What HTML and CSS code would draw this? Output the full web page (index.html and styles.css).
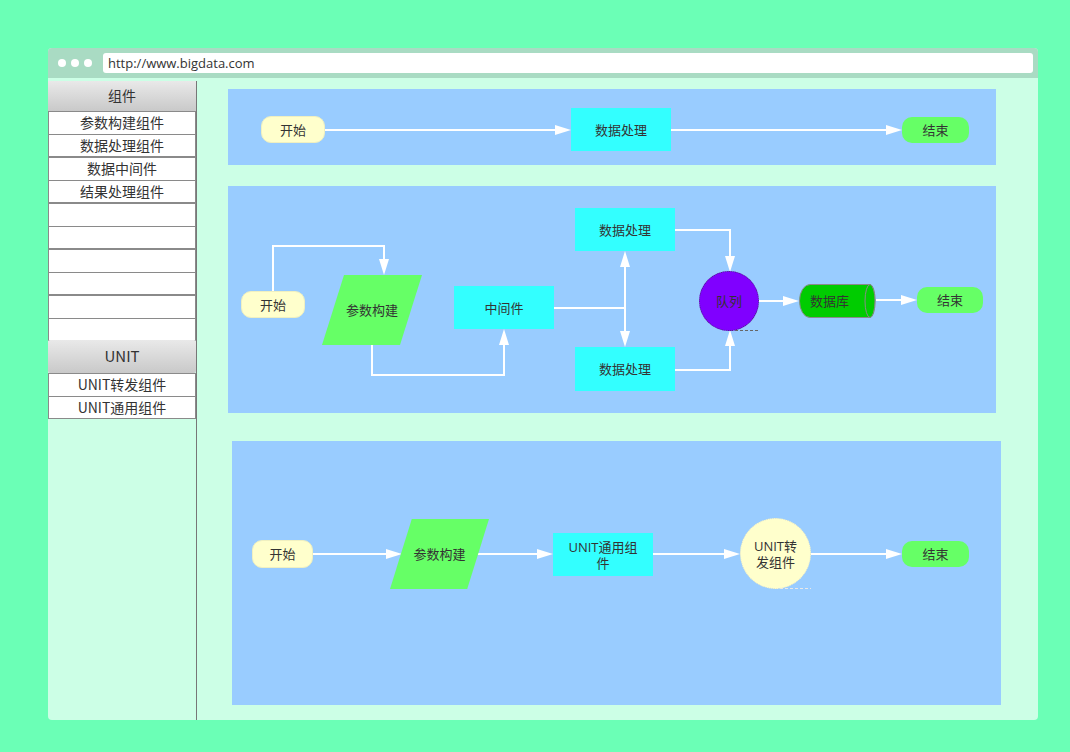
FILE: index.html
```html
<!DOCTYPE html>
<html lang="zh">
<head>
<meta charset="utf-8">
<title>bigdata</title>
<link rel="stylesheet" href="styles.css">
</head>
<body>
<div class="window">
  <div class="topbar">
    <div class="dots"><span class="dot"></span><span class="dot"></span><span class="dot"></span></div>
    <div class="url">http://www.bigdata.com</div>
  </div>
  <div class="content">
    <aside class="sidebar">
      <div class="group-head">组件</div>
      <ul class="group"><li>参数构建组件</li><li>数据处理组件</li></ul>
      <ul class="group"><li>数据中间件</li><li>结果处理组件</li></ul>
      <ul class="group"><li></li><li></li></ul>
      <ul class="group"><li></li><li></li></ul>
      <ul class="group"><li></li><li></li></ul>
      <div class="group-head unit">UNIT</div>
      <ul class="group"><li>UNIT转发组件</li><li>UNIT通用组件</li></ul>
    </aside>
    <main class="main">
      <!-- Panel 1 -->
      <section class="panel p1">
        <svg class="wires" width="768" height="76">
          <line x1="97" y1="41" x2="330" y2="41"/><polygon points="343,41 327,36 327,46"/>
          <line x1="443" y1="41" x2="660" y2="41"/><polygon points="674,41 658,36 658,46"/>
        </svg>
        <div class="node pill start" style="left:33px;top:27px;width:64px;height:27px">开始</div>
        <div class="node box" style="left:343px;top:19px;width:100px;height:43px">数据处理</div>
        <div class="node pill end" style="left:674px;top:28px;width:67px;height:26px">结束</div>
      </section>

      <!-- Panel 2 -->
      <section class="panel p2">
        <svg class="wires" width="768" height="227">
          <polyline points="45,105 45,60 156,60 156,76"/><polygon points="156,89 151,73 161,73"/>
          <polyline points="144,159 144,189 276,189 276,156"/><polygon points="276,143 271,159 281,159"/>
          <line x1="326" y1="122" x2="397" y2="122"/>
          <line x1="397" y1="78" x2="397" y2="148"/>
          <polygon points="397,65 392,81 402,81"/><polygon points="397,161 392,145 402,145"/>
          <polyline points="447,44 502,44 502,73"/><polygon points="502,86 497,70 507,70"/>
          <polyline points="447,184 502,184 502,157"/><polygon points="502,144 497,160 507,160"/>
          <line x1="531" y1="115" x2="558" y2="115"/><polygon points="571,115 555,110 555,120"/>
          <line x1="648" y1="114" x2="676" y2="114"/><polygon points="689,114 673,109 673,119"/>
          <line class="dash dark" x1="502" y1="144.5" x2="531" y2="144.5"/>
        </svg>
        <div class="node pill start" style="left:13px;top:105px;width:64px;height:27px">开始</div>
        <div class="node para" style="left:94px;top:89px;width:100px;height:70px">参数构建</div>
        <div class="node box" style="left:226px;top:100px;width:100px;height:43px">中间件</div>
        <div class="node box" style="left:347px;top:22px;width:100px;height:43px">数据处理</div>
        <div class="node box" style="left:347px;top:161px;width:100px;height:44px">数据处理</div>
        <div class="node circle queue" style="left:471px;top:85px;width:60px;height:60px">队列</div>
        <div class="node db" style="left:571px;top:98px;width:77px;height:34px">
          <svg class="db-shape" width="77" height="34">
            <path d="M11,0.5 H71 A5,16.5 0 0 1 71,33.5 H11 A10.5,16.5 0 0 1 11,0.5 Z"/>
            <ellipse cx="71" cy="17" rx="5" ry="16.5"/>
          </svg>
          <span class="db-label">数据库</span>
        </div>
        <div class="node pill end" style="left:689px;top:101px;width:66px;height:26px">结束</div>
      </section>

      <!-- Panel 3 -->
      <section class="panel p3">
        <svg class="wires" width="769" height="264">
          <line x1="81" y1="113" x2="157" y2="113"/><polygon points="170,113 154,108 154,118"/>
          <line x1="245" y1="113" x2="308" y2="113"/><polygon points="321,113 305,108 305,118"/>
          <line x1="421" y1="113" x2="495" y2="113"/><polygon points="508,113 492,108 492,118"/>
          <line x1="579" y1="113" x2="657" y2="113"/><polygon points="670,113 654,108 654,118"/>
          <line class="dash light" x1="543" y1="147.5" x2="579" y2="147.5"/>
        </svg>
        <div class="node pill start" style="left:20px;top:99px;width:61px;height:28px">开始</div>
        <div class="node para" style="left:158px;top:78px;width:99px;height:70px">参数构建</div>
        <div class="node box two" style="left:321px;top:92px;width:100px;height:43px">UNIT通用组<br>件</div>
        <div class="node circle fwd" style="left:508px;top:77px;width:71px;height:71px">UNIT转<br>发组件</div>
        <div class="node pill end" style="left:670px;top:100px;width:67px;height:26px">结束</div>
      </section>
    </main>
  </div>
</div>
</body>
</html>
```

FILE: styles.css
```css
html, body {
  margin: 0;
  padding: 0;
}
body {
  background: #6bffb6;
  font-family: "Open Sans", "Noto Sans CJK SC", sans-serif;
  color: #333;
  width: 1070px;
  height: 752px;
  overflow: hidden;
}
.window {
  position: absolute;
  left: 48px;
  top: 48px;
  width: 990px;
  height: 672px;
  border-radius: 4px;
  overflow: hidden;
  background: #ccffe6;
  display: flex;
  flex-direction: column;
}
.topbar {
  height: 30px;
  background: #a9dbc3;
  display: flex;
  align-items: center;
  padding: 0 5px 0 10px;
  box-sizing: border-box;
  flex: none;
}
.dots {
  display: flex;
  gap: 5px;
  margin-right: 11px;
}
.dot {
  width: 8px;
  height: 8px;
  border-radius: 50%;
  background: #fff;
}
.url {
  flex: 1;
  height: 20px;
  background: #fff;
  border-radius: 3px;
  font-size: 13px;
  line-height: 20px;
  padding-left: 5px;
  color: #333;
}
.content {
  flex: 1;
  display: flex;
}
.sidebar {
  width: 148px;
  flex: none;
  margin-top: 3px;
  border-right: 1px solid #777;
  font-family: "Noto Sans CJK SC", sans-serif;
  font-size: 14px;
}
.group-head {
  height: 30px;
  line-height: 28px;
  text-align: center;
  background: linear-gradient(#e9e9e9, #c9c9c9);
  font-size: 14px;
  color: #333;
}
.group-head.unit {
  height: 33px;
  line-height: 32px;
  font-size: 15px;
  border-radius: 2px;
  margin-top: -1px;
}
.group {
  list-style: none;
  margin: 0;
  padding: 0;
  border: 1px solid #8a8a8a;
  background: #fff;
}
.group li {
  height: 22px;
  line-height: 20px;
  text-align: center;
  color: #333;
  font-size: 14px;
}
.group li + li {
  height: 21px;
  border-top: 1px solid #8a8a8a;
}
.main {
  flex: 1;
  display: flex;
  flex-direction: column;
  align-items: flex-start;
}
.panel {
  position: relative;
  background: #99ccff;
  flex: none;
}
.p1 {
  margin: 11px 0 0 31px;
  width: 768px;
  height: 76px;
}
.p2 {
  margin: 21px 0 0 31px;
  width: 768px;
  height: 227px;
}
.p3 {
  margin: 28px 0 0 35px;
  width: 769px;
  height: 264px;
}
.wires {
  position: absolute;
  left: 0;
  top: 0;
}
.wires line, .wires polyline {
  stroke: #fff;
  stroke-width: 2;
  fill: none;
}
.wires polygon {
  fill: #fff;
}
.wires .dash {
  stroke-width: 1;
  stroke-dasharray: 3 2;
}
.wires .dash.dark {
  stroke: #666;
}
.wires .dash.light {
  stroke: #e8e8e8;
}
.node {
  position: absolute;
  box-sizing: border-box;
  display: flex;
  align-items: center;
  justify-content: center;
  text-align: center;
  font-family: "Open Sans", "Noto Sans CJK SC", sans-serif;
  font-size: 13px;
  color: #333;
  line-height: 16px;
}
.pill {
  border-radius: 10px;
}
.start {
  background: #ffffcc;
  border: 1px solid #f0f0c0;
}
.end {
  background: #66ff66;
}
.box {
  background: #33ffff;
}
.box.two {
  line-height: 16px;
}
.para {
  background: #66ff66;
  clip-path: polygon(22% 0, 100% 0, 78% 100%, 0 100%);
}
.circle {
  border-radius: 50%;
}
.queue {
  background: #8000ff;
  border: 1px dotted #4a2a80;
}
.fwd {
  background: #ffffcc;
  border: 1px dotted #e6e6c8;
}
.db-shape {
  position: absolute;
  left: 0;
  top: 0;
}
.db-shape path, .db-shape ellipse {
  fill: #00cc00;
  stroke: #8a8a8a;
  stroke-width: 1;
}
.db.node {
  justify-content: flex-start;
}
.db-label {
  position: relative;
  margin-left: 11px;
}
```
